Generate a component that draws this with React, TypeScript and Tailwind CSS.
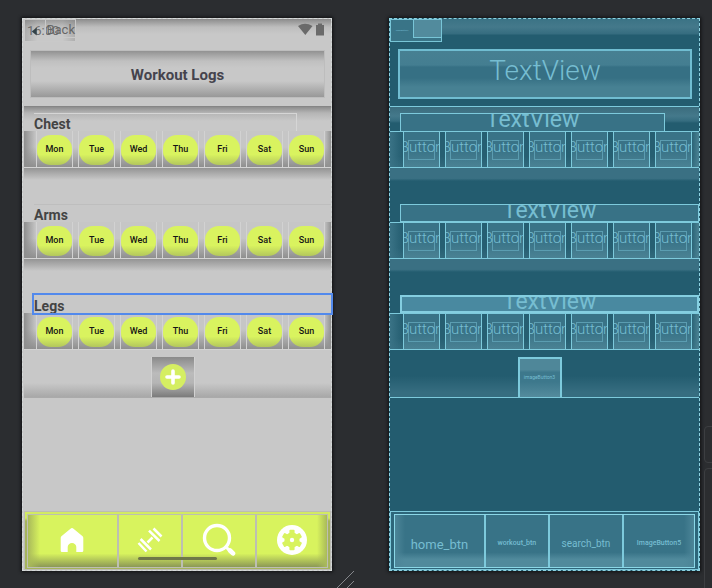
import React from "react";
import clsx from "clsx";

const DAYS = ["Mon", "Tue", "Wed", "Thu", "Fri", "Sat", "Sun"];
const GROUPS = ["Chest", "Arms", "Legs"];

function HomeIcon() {
  return (
    <svg width="24" height="26" viewBox="0 0 24 26" fill="#fff" aria-hidden="true">
      <path d="M12 1 Q12.8 1 13.5 1.7 L22.6 9.3 Q23.3 10 23.3 11 V23.8 Q23.3 25 22 25 H16.3 V20 A4.3 4 0 0 0 7.7 20 V25 H2 Q.7 25 .7 23.8 V11 Q.7 10 1.4 9.3 L10.5 1.7 Q11.2 1 12 1Z" />
    </svg>
  );
}

function DumbbellIcon() {
  return (
    <svg width="26" height="26" viewBox="0 0 26 26" fill="none" stroke="#fff" strokeWidth="2.5" aria-hidden="true">
      <path d="M1.5 16 L9.500 24.500 M3.600 12 L14 22.500 M12 3.600 L22.500 14 M16.500 1.500 L24.500 9.500 M10.500 15.500 L15.500 10.500" />
    </svg>
  );
}

function SearchIcon() {
  return (
    <svg width="34" height="34" viewBox="0 0 34 34" fill="none" stroke="#fff" aria-hidden="true">
      <circle cx="15" cy="15" r="12.5" strokeWidth="3.4" />
      <path d="M24 24 L27 27" strokeWidth="3" />
      <path d="M28 27.500 L31 30.4" strokeWidth="4.6" strokeLinecap="round" />
    </svg>
  );
}

function GearIcon() {
  return (
    <svg width="30" height="30" viewBox="0 0 30 30" aria-hidden="true">
      <circle cx="15" cy="15" r="15" fill="#fff" />
      <g fill="#d8f35e">
        <circle cx="15" cy="15" r="7.6" />
        <rect x="12.4" y="4.8" width="5.2" height="20.4" rx="1" />
        <rect x="12.4" y="4.8" width="5.2" height="20.4" rx="1" transform="rotate(60 15 15)" />
        <rect x="12.4" y="4.8" width="5.2" height="20.4" rx="1" transform="rotate(120 15 15)" />
      </g>
      <circle cx="15" cy="15" r="2.2" fill="#fff" />
    </svg>
  );
}

const NAV = [
  { label: "Home", Icon: HomeIcon, id: "home_btn", size: "pt-2 text-[13px] leading-4" },
  { label: "Workout", Icon: DumbbellIcon, id: "workout_btn", size: "pt-1 text-[7px] leading-3 font-medium" },
  { label: "Search", Icon: SearchIcon, id: "search_btn", size: "pt-1.5 text-[10px] leading-3" },
  { label: "Settings", Icon: GearIcon, id: "ImageButton5", size: "pt-1 text-[7px] leading-3 font-medium" },
];

function DesignView() {
  return (
    <section className="relative flex min-w-0 flex-col border border-dashed border-[#d5dada] bg-[#c8c8c8] pl-px shadow-[0_0_3px_1px_#101113]">
      <header className="relative h-[87px] bg-[linear-gradient(#8b8b8b,#bdbdbd_8px,#c8c8c8_15px)] px-[6px] pt-[31px]">
        <span className="absolute top-1 left-[3px] text-[13px] leading-4 text-[#555]">16:00</span>
        <button className="absolute top-0 left-0 flex h-[23px] w-[52px] border border-[#c9c9c9] bg-[linear-gradient(90deg,#88888866,#c8c8c833_25%,#c8c8c833_75%,#88888866)] text-[13px] text-[#666]">
          <svg width="21" height="22" viewBox="0 0 21 22" aria-hidden="true">
            <path d="M12 7.500 V15.500 L7 11.500Z" fill="#344247" />
          </svg>
          <span className="h-[18px] flex-1 border-b border-l border-[#c9c9c9] text-left leading-[19px]">Back</span>
        </button>
        <svg className="absolute top-[4px] right-[6px]" width="27" height="14" viewBox="0 0 27 14" fill="#6a6a6a" aria-hidden="true">
          <path d="M0 3 Q7 -1.5 14.500 3 L7.300 12Z" />
          <path d="M18 2 H20 V.5 H24 V2 H26 V12.500 H18Z" />
        </svg>
        <h1 className="flex h-12 items-center justify-center border border-[#bdbdbd] bg-[linear-gradient(#929292,#c0c0c0_10px,#c8c8c8_17px,#c8c8c8_30px,#989898)] pt-0.5 text-[15px] font-bold text-[#45434d]">
          Workout Logs
        </h1>
      </header>
      <div className="border-t border-[#858585] bg-[linear-gradient(#8d8d8d,#b5b5b5_6px,#c8c8c8_14px)] pt-[6px]">
        {GROUPS.map((name, g) => (
          <div key={name} className={clsx(g < 2 && "h-[91px]")}>
            <h2
              className={clsx(
                "ml-[10px] flex h-[18px] items-end text-sm leading-[14px] font-bold text-[#444]",
                g === 0 && "mr-[34px] border-t border-r border-[#d6d6d6]",
                g === 1 && "border-t border-[#bebebe]",
                g === 2 && "outline-2 outline-[#5289ec]",
              )}
            >
              {name}
            </h2>
            <div className="grid h-[37px] grid-cols-7 gap-[5px] border-b border-[#d3d3d3] bg-[linear-gradient(90deg,#8e8e8e,transparent_12px,transparent_calc(100%-7px),#929292),linear-gradient(#c6c6c6_45%,#8f8f8f)] pr-[6px] pl-3">
              {DAYS.map((day) => (
                <div key={day} className="flex items-center justify-center border-x border-[#d2d2d2] pt-0.5">
                  <button className="h-[30px] w-full rounded-[14px] bg-[linear-gradient(#d9f35f_65%,#b3c75c)] text-[9px] font-medium text-[#151515]">
                    {day}
                  </button>
                </div>
              ))}
            </div>
            {g < 2 && <div className="h-3 bg-[linear-gradient(#949494,#c8c8c8)]" />}
          </div>
        ))}
        <div className="flex h-12 items-end justify-center border-b border-[#aaa] bg-[linear-gradient(#c8c8c8_70%,#a8a8a8)] pr-[10px]">
          <button aria-label="Add workout" className="flex h-10 w-11 items-center justify-center border-x border-[#d2d2d2] bg-[linear-gradient(#8a8a8a,#bbb_40%,#b5b5b5_65%,#7b7b7b)]">
            <svg width="28" height="28" viewBox="0 0 28 28" aria-hidden="true">
              <circle cx="14" cy="14" r="13" fill="#d5ee62" />
              <path d="M14 8 V20 M8 14 H20" stroke="#fff" strokeWidth="3.6" strokeLinecap="round" />
            </svg>
          </button>
        </div>
      </div>
      <nav className="relative mt-auto h-[59px] border border-[#bcbcb4] bg-[linear-gradient(#d2ea62_6px,#a5b35c_9px)] px-[2px] pt-[2px] pb-px">
        <div className="grid h-full grid-cols-[90fr_65fr_75fr_73fr] border border-[#bdbfb2] bg-[linear-gradient(90deg,#a9ba5a,transparent_12px,transparent_calc(100%-10px),#a9ba5a),linear-gradient(#d8f35e_74%,#8c9856)]">
          {NAV.map(({ label, Icon }, i) => (
            <button key={label} aria-label={label} className={clsx("flex items-center justify-center pb-0.5", i > 0 && "border-l-2 border-[#bdbfb2]")}>
              <Icon />
            </button>
          ))}
        </div>
        <span className="absolute bottom-[9px] left-[37%] h-[3px] w-[26%] rounded-full bg-[#6f7748]" />
      </nav>
      <svg className="absolute -right-6 -bottom-[18px]" width="18" height="18" viewBox="0 0 18 18" stroke="#85878b" strokeWidth="1" aria-hidden="true">
        <path d="M0 18 L17 1 M10 18 L17 11" />
      </svg>
    </section>
  );
}

function BlueprintView() {
  return (
    <section className="flex min-w-0 flex-col border border-dashed border-[#8ed3e2] bg-[#235c6f] text-[#76bdd1] shadow-[0_0_3px_1px_#101113]">
      <header className="relative h-[87px] bg-[linear-gradient(#3b7385,#44798b_8px,#356c7f_15px,#235c6f_16px)] pt-[30px] pr-[7px] pl-2">
        <div className="absolute top-0 left-0 flex h-[23px] w-[52px] border border-[#78c5d7] bg-[#397487]">
          <span className="flex w-[22px] items-center justify-center text-[2px]">imageButton2</span>
          <span className="h-[18px] flex-1 border-b border-l border-[#78c5d7] bg-[#528b9d]" />
        </div>
        <div className="flex h-[50px] items-center justify-center border-2 border-[#70bdd1] bg-[linear-gradient(#478092,#447e91_14px,#367084_16px,#367084_27px,#478193_36px)] pb-[6px] text-[28px] leading-8 font-light">
          TextView
        </div>
      </header>
      <div className="border-t border-[#7dcadc] bg-[linear-gradient(#3b6c7d,#44798b_9px,#356c7f_14px,#235c6f_16px)] pt-[6px]">
        {GROUPS.map((name, g) => (
          <div key={name} className={clsx(g < 2 && "h-[91px]")}>
            <div
              className={clsx(
                "ml-[10px] flex h-[18px] items-end justify-center overflow-hidden text-[23px] font-normal",
                g === 0 && "mr-[34px] border border-b-0 border-[#7dcadc] bg-[#387286] leading-[22px]",
                g === 1 && "border border-[#7dcadc] bg-[#387286] leading-5",
                g === 2 && "border-2 border-[#84cee0] bg-[#4989a0] leading-[18px]",
              )}
            >
              TextView
            </div>
            <div className="grid h-[37px] grid-cols-7 gap-[5px] border-y border-[#7dcadc] bg-[linear-gradient(90deg,#3a7386,transparent_12px,transparent_calc(100%-8px),#4b8394),linear-gradient(#265f72_70%,#31697c)] pr-[7px] pl-[13px]">
              {DAYS.map((day) => (
                <div key={day} className="relative flex items-center justify-center overflow-hidden border-x border-[#7dcadc] bg-[linear-gradient(#397387_50%,#4a8294)] pb-1.5 text-[15px] leading-4 font-light">
                  <span className="absolute inset-x-1 top-2 h-5 border border-[#5b9db1]" />
                  <span className="relative">Button</span>
                </div>
              ))}
            </div>
            {g < 2 && <div className="h-[13px] bg-[linear-gradient(#3a7083_80%,#235c6f)]" />}
          </div>
        ))}
        <div className="flex h-12 items-end justify-center border-b border-[#7dcadc] bg-[linear-gradient(#235c6f_55%,#366d80_90%)] pr-[10px]">
          <div className="flex h-10 w-11 items-center justify-center border-2 border-b-0 border-[#7dcadc] bg-[linear-gradient(#4f8799_28%,#3d788c_35%,#3d788c_60%,#548b9d)] text-[5px]">
            imageButton3
          </div>
        </div>
      </div>
      <div className="mt-auto h-[59px] border border-[#7dcadc] bg-[#2d667a] px-[3px] pt-[2px] pb-px">
        <div className="grid h-full grid-cols-[90fr_65fr_75fr_73fr] border border-[#8bd7e7] bg-[linear-gradient(90deg,#4c8598,transparent_10px,transparent_calc(100%-10px),#4c8598),linear-gradient(#387387_72%,#508a9c_85%)]">
          {NAV.map(({ id, size }, i) => (
            <span key={id} className={clsx("flex min-w-0 items-center justify-center", i > 0 && "border-l-2 border-[#7dcadc]", size)}>
              {id}
            </span>
          ))}
        </div>
      </div>
    </section>
  );
}

export default function App() {
  return (
    <main className="relative grid min-h-screen grid-cols-[310fr_311fr] gap-[57px] overflow-hidden bg-[#2b2d30] pt-[18px] pr-3 pb-[17px] pl-[22px] font-['Roboto',sans-serif]">
      <DesignView />
      <BlueprintView />
      <span className="absolute -right-2 bottom-[125px] h-[37px] w-4 rounded border border-[#3c3e41]" />
      <span className="absolute -right-2 -bottom-2 h-32 w-4 rounded border border-[#3c3e41]" />
    </main>
  );
}
